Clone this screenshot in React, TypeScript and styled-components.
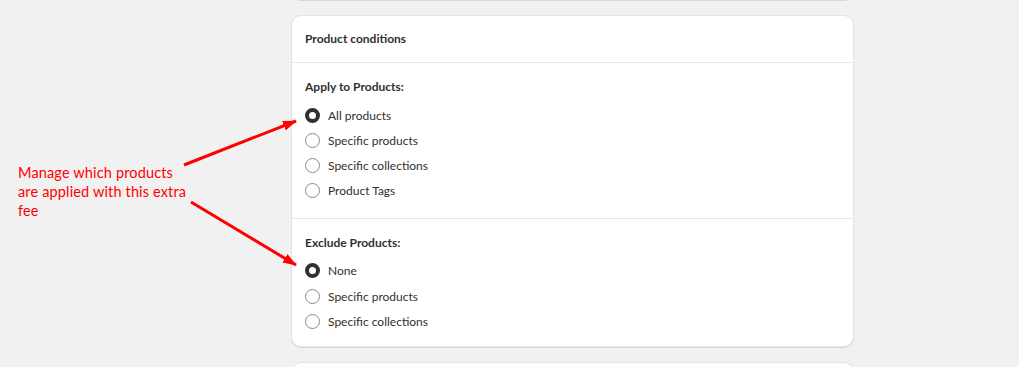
import styled, { createGlobalStyle } from 'styled-components'

const GlobalStyle = createGlobalStyle`
  html, body { margin: 0; padding: 0; background: #f1f1f1; }
  body { font-family: Lato, "Noto Sans", sans-serif; color: #303030; }
  * { box-sizing: border-box; }
`

const Page = styled.div`
  position: relative;
  display: grid;
  grid-template-columns: 291px 563px;
  height: 367px;
  overflow: hidden;
`

const Note = styled.div`
  padding: 163px 0 0 18px;
  font-family: Lato, "Liberation Sans", sans-serif;
  font-size: 14.5px;
  line-height: 19px;
  letter-spacing: 0.15px;
  color: #ff0000;
  width: 195px;
`

const Column = styled.div`
  display: flex;
  flex-direction: column;
  gap: 15px;
  margin-top: -40px;
`

const Card = styled.div<{ $h?: number }>`
  background: #fff;
  border-radius: 10px;
  border: 1px solid #e3e3e3;
  box-shadow: 0 1px 0 rgba(0, 0, 0, 0.1);
  flex-shrink: 0;
  ${({ $h }) => ($h ? `height: ${$h}px;` : '')}
`

const CardHeader = styled.div`
  padding: 15px 13px;
  font-size: 12px;
  line-height: 16px;
  font-weight: 700;
  border-bottom: 1px solid #e6e6e6;
`

const Section = styled.div`
  padding: 16px 13px 17px;
  display: flex;
  flex-direction: column;
  gap: 10px;
  & + & { border-top: 1px solid #e6e6e6; padding-bottom: 15px; }
`

const SectionTitle = styled.div`
  font-size: 12px;
  line-height: 16px;
  font-weight: 700;
`

const Options = styled.div`
  display: flex;
  flex-direction: column;
  gap: 5.3px;
`

const Option = styled.label`
  display: flex;
  align-items: center;
  gap: 8px;
  height: 20px;
  font-size: 12px;
  color: #303030;
`

const Radio = styled.span<{ $checked?: boolean }>`
  width: 15px;
  height: 15px;
  border-radius: 50%;
  flex-shrink: 0;
  background: #fff;
  border: ${({ $checked }) => ($checked ? '4.5px solid #303030' : '1px solid #8a8a8a')};
`

const Arrows = styled.svg`
  position: absolute;
  left: 0;
  top: 0;
  pointer-events: none;
`

const apply = ['All products', 'Specific products', 'Specific collections', 'Product Tags']
const exclude = ['None', 'Specific products', 'Specific collections']

export default function App() {
  return (
    <>
      <GlobalStyle />
      <Page>
        <Note>Manage which products are applied with this extra fee</Note>
        <Column>
          <Card $h={40} />
          <Card>
            <CardHeader>Product conditions</CardHeader>
            <Section>
              <SectionTitle>Apply to Products:</SectionTitle>
              <Options>
                {apply.map((o, i) => (
                  <Option key={o}><Radio $checked={i === 0} />{o}</Option>
                ))}
              </Options>
            </Section>
            <Section>
              <SectionTitle>Exclude Products:</SectionTitle>
              <Options>
                {exclude.map((o, i) => (
                  <Option key={o}><Radio $checked={i === 0} />{o}</Option>
                ))}
              </Options>
            </Section>
          </Card>
          <Card $h={60} />
        </Column>
        <Arrows width="1019" height="367" viewBox="0 0 1019 367">
          <defs>
            <marker id="head" viewBox="0 0 14 10" refX="13" refY="5" markerWidth="14" markerHeight="10" markerUnits="userSpaceOnUse" orient="auto">
              <path d="M0 0 L14 5 L0 10 z" fill="#ff0000" />
            </marker>
          </defs>
          <line x1="184" y1="165" x2="296" y2="121" stroke="#ff0000" strokeWidth="3" markerEnd="url(#head)" />
          <line x1="191" y1="202" x2="296" y2="265" stroke="#ff0000" strokeWidth="3" markerEnd="url(#head)" />
        </Arrows>
      </Page>
    </>
  )
}
